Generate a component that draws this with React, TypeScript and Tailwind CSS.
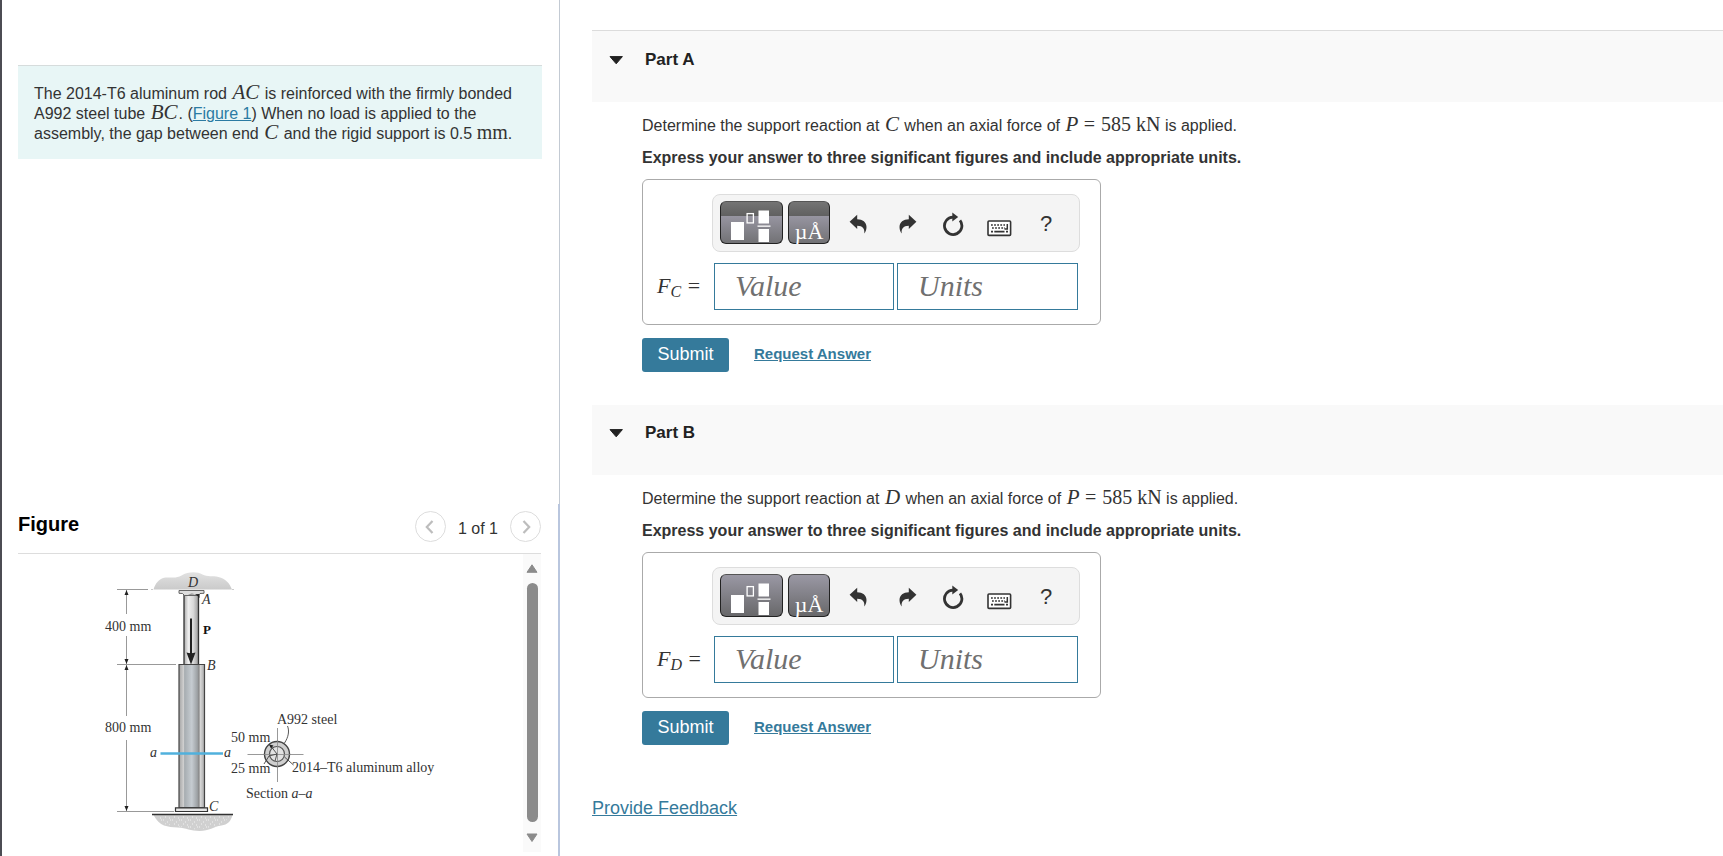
import type { ReactNode } from "react";

function MathVar({ children }: { children: ReactNode }) {
  return <i className="px-px font-['Liberation_Serif',serif] text-[21px] leading-[0]">{children}</i>;
}

function MathText({ children }: { children: ReactNode }) {
  return <span className="font-['Liberation_Serif',serif] text-[20px] leading-[0]">{children}</span>;
}

function TemplatesIcon() {
  return (
    <svg width="42" height="34" viewBox="1 0 42 34" aria-hidden="true">
      <rect x="1" y="13" width="13" height="18" fill="#fff" />
      <rect x="17.100" y="4.600" width="6.300" height="9.300" fill="none" stroke="#fff" strokeWidth="1.300" />
      <rect x="28.500" y="1.500" width="10.500" height="13" fill="#fff" />
      <rect x="27.500" y="16.500" width="13" height="1.300" fill="#fff" />
      <rect x="28.500" y="20" width="10.500" height="13" fill="#fff" />
    </svg>
  );
}

function UndoIcon() {
  return (
    <svg width="18" height="20" viewBox="0 0 18 20" aria-hidden="true">
      <path d="M.6 7.8 8.2.7v4.5c5.4 0 9.3 2.9 9.3 7.8 0 2.9-1 5-2.2 6.5.5-4.7-1.4-7.8-7.1-7.8v3.200z" fill="#333" />
    </svg>
  );
}

function RedoIcon() {
  return (
    <svg width="18" height="20" viewBox="0 0 18 20" aria-hidden="true">
      <path d="M17.4 7.8 9.8.7v4.5C4.4 5.2.5 8.1.5 13c0 2.9 1 5 2.2 6.5-.5-4.7 1.4-7.8 7.1-7.8v3.200z" fill="#333" />
    </svg>
  );
}

function ResetIcon() {
  return (
    <svg width="22" height="24" viewBox="0 0 22 24" aria-hidden="true">
      <path d="M18 8.400A8.700 8.700 0 1 1 11 5.100" fill="none" stroke="#333" strokeWidth="2.800" />
      <path d="M10.300.4 16.200 5l-5.900 4.600z" fill="#333" />
    </svg>
  );
}

function KeyboardIcon() {
  return (
    <svg width="25" height="17" viewBox="0 0 25 17" aria-hidden="true">
      <rect x="1" y="1" width="22.600" height="14.400" rx="1" fill="#fff" stroke="#333" strokeWidth="1.600" />
      <path d="M4 5h14M5 8h13" stroke="#333" strokeWidth="1.700" strokeDasharray="1.800 1.300" fill="none" />
      <path d="M20.300 4v5h-2.800" stroke="#333" strokeWidth="1.500" fill="none" />
      <path d="M4 11.600h2M7.300 11.600h10.200M19 11.600h2" stroke="#333" strokeWidth="1.700" fill="none" />
    </svg>
  );
}

type PartProps = {
  name: string;
  point: string;
  first?: boolean;
};

function Part({ name, point, first }: PartProps) {
  const paletteFill = first
    ? "bg-[linear-gradient(#747474_0,#606060_14px,#9795a1_14px,#727275_100%)]"
    : "bg-[linear-gradient(#9a98a4,#68686a)]";
  return (
    <section>
      <header className={first ? "border-t border-[#dcdcdc] bg-[#f9f9f9] pt-[17px] pb-[30px]" : "bg-[#f9f9f9] pt-4 pb-[30px]"}>
        <h2 className="text-[17px] leading-6 font-bold text-[#222]">
          <button type="button" className="flex items-center gap-[21px] pl-[17px]">
            <svg width="15" height="9" viewBox="0 0 15 9" aria-hidden="true">
              <path d="M1 .6h12.400L7.200 7.800z" fill="#222" stroke="#222" strokeLinejoin="round" />
            </svg>
            {name}
          </button>
        </h2>
      </header>
      <div className="pt-3 pl-[50px] text-base leading-6 text-[#333]">
        <p>
          Determine the support reaction at <MathVar>{point}</MathVar> when an axial force of <MathVar>P</MathVar>{" "}
          <MathText>
            <span className="pr-px">=</span> 585 kN
          </MathText>{" "}
          is applied.
        </p>
        <p className="mt-2 font-bold">Express your answer to three significant figures and include appropriate units.</p>
        <div className="mt-[9px] w-[459px] rounded-md border border-[#aaa] pt-[14px] pr-5 pb-[14px] pl-[14px]">
          <div className="ml-[55px] flex h-[58px] items-center rounded-lg border border-[#ddd] bg-[#f4f4f4] pt-[2px] pl-[7px]">
            <button type="button" aria-label="Templates" className={`mt-1 flex h-[43px] w-[63px] items-end justify-center self-start rounded-md border border-[#222] border-t-[#555] ${paletteFill}`}>
              <TemplatesIcon />
            </button>
            <button type="button" aria-label="Symbols" className={`mt-1 ml-[5px] flex h-[43px] w-[42px] items-end justify-center self-start rounded-md border border-[#222] border-t-[#555] font-['Liberation_Serif',serif] text-[22px] leading-[22px] text-white ${paletteFill}`}>
              µÅ
            </button>
            <button type="button" aria-label="Undo" className="ml-[19px]">
              <UndoIcon />
            </button>
            <button type="button" aria-label="Redo" className="ml-8">
              <RedoIcon />
            </button>
            <button type="button" aria-label="Reset" className="ml-[25px]">
              <ResetIcon />
            </button>
            <button type="button" aria-label="Keyboard shortcuts" className="mt-2 ml-[23px]">
              <KeyboardIcon />
            </button>
            <button type="button" aria-label="Help" className="ml-[28px] text-[22px] leading-6 text-[#333]">
              ?
            </button>
          </div>
          <div className="mt-[11px] flex items-center">
            <label htmlFor={`value-${point}`} className="w-[57px] font-['Liberation_Serif',serif] text-[22px] whitespace-nowrap">
              <i>F</i>
              <sub className="text-base italic">{point}</sub> <span className="pl-px">=</span>
            </label>
            <input
              id={`value-${point}`}
              placeholder="Value"
              className="h-[47px] w-[180px] border border-[#357a9b] bg-white pb-[2px] pl-5 font-['Liberation_Serif',serif] text-[30px] placeholder:text-[#707070] placeholder:italic"
            />
            <input
              aria-label="Units"
              placeholder="Units"
              className="ml-[3px] h-[47px] w-[181px] border border-[#357a9b] bg-white pb-[2px] pl-5 font-['Liberation_Serif',serif] text-[30px] placeholder:text-[#707070] placeholder:italic"
            />
          </div>
        </div>
        <div className="mt-[13px] flex items-center gap-[25px]">
          <button type="button" className="h-[34px] w-[87px] rounded-[3px] bg-[#357a9b] pb-[2px] text-lg leading-6 text-white">
            Submit
          </button>
          <a href="#answer" className="pb-[2px] text-[15px] font-bold text-[#357a9b] underline">
            Request Answer
          </a>
        </div>
      </div>
    </section>
  );
}

function RodFigure() {
  return (
    <svg width="504" height="298" viewBox="18 554 504 298" role="img" aria-label="Aluminum rod and steel tube assembly" className="font-['Liberation_Serif',serif]">
      <defs>
        <linearGradient id="rod">
          <stop offset="0" stopColor="#aaa" />
          <stop offset=".3" stopColor="#eee" />
          <stop offset=".65" stopColor="#d8d8d8" />
          <stop offset="1" stopColor="#999" />
        </linearGradient>
        <linearGradient id="tube">
          <stop offset="0" stopColor="#a3a3a3" />
          <stop offset=".18" stopColor="#cfcfcf" />
          <stop offset=".22" stopColor="#a7adb1" />
          <stop offset=".5" stopColor="#c6ccd1" />
          <stop offset=".72" stopColor="#9da1a4" />
          <stop offset=".78" stopColor="#888" />
          <stop offset=".84" stopColor="#d6d6d6" />
          <stop offset="1" stopColor="#a8a8a8" />
        </linearGradient>
        <linearGradient id="wall" x2="0" y2="1">
          <stop offset="0" stopColor="#e2e2e2" />
          <stop offset="1" stopColor="#cacaca" />
        </linearGradient>
        <pattern id="grain" width="9" height="7" patternUnits="userSpaceOnUse">
          <path d="M1 1h1M5 3h1M3 5h1M7 6h1M8 1h1" stroke="#f2f2f2" />
        </pattern>
      </defs>

      <path d="M153.500 589.500c2-6 5-11 12-12 7-.5 11 1 16-2 6-3.500 15-4.500 21-1 5 2.500 10 1 16 2.500 7 1.500 11 6 13.500 12.500z" fill="url(#wall)" />
      <path d="M153.500 815h79c-2 7-5 9.500-11 10.500-8 1-12 5.500-22 5.500-9 0-13-3-22-3.500-10-.5-18-1-24-12.500z" fill="#d0d0d0" />
      <path d="M157 816h73l-8 9-24 5-35-6z" fill="url(#grain)" />

      <g stroke="#999" strokeWidth="1">
        <path d="M117 589.500h31M151.500 589.500h1M232.500 589.500h1M117 664.500h59M117 811.500h57M126.500 590v24M126.500 636v80M126.500 740v71" />
        <path d="M247.500 754.500h56M277.500 728v54" />
      </g>
      <path d="M126.500 590l-2 5h4zM126.500 664l-2-5h4zM126.500 665l-2 5h4zM126.500 811l-2-5h4z" fill="#222" />

      <path d="M184 594h14.500v70.500H184z" fill="url(#rod)" />
      <path d="M184 594v70M198.500 594v70" stroke="#333" strokeWidth="1.300" />
      <path d="M179 590.500h25v2.800l-4 .2-2 2h-13.500l-2-2-3.500-.2z" fill="#ddd" stroke="#555" strokeWidth=".9" />
      <path d="M188 594.500q7-2.500 11.500 3.500v-4z" fill="#222" />
      <path d="M191 618.500v36" stroke="#222" strokeWidth="2" />
      <path d="M186.500 652.500q4.500 1.500 9 0l-4.500 12z" fill="#222" />
      <path d="M179 664.500h25.500v143H179z" fill="url(#tube)" stroke="#444" strokeWidth="1.200" />
      <path d="M175.500 807.800h32v3.700h-32z" fill="#e8e8e8" stroke="#333" strokeWidth="1.200" />
      <path d="M152 814.400h81" stroke="#333" strokeWidth="1.500" />
      <path d="M160.500 753.500H223" stroke="#50b1dd" strokeWidth="2.400" />

      <circle cx="277" cy="754" r="12.500" fill="#cfcfcf" stroke="#444" strokeWidth="1.400" />
      <circle cx="277" cy="754" r="7.500" fill="#e2e2e2" stroke="#555" strokeWidth="1.200" />
      <path d="M264 754.500h26M277.500 741v26" stroke="#888" strokeWidth=".8" />
      <path d="M270 745l7 9-2 7M277 754l-8 2-5 8M287.500 726c2 5 1 11-3 17M284.500 757l9 8" fill="none" stroke="#444" strokeWidth=".9" />
      <path d="M269 744.500l4.500 1-2.500 3z" fill="#222" />

      <g fill="#333" fontSize="14">
        <text x="105" y="631">400 mm</text>
        <text x="105" y="732">800 mm</text>
        <text x="231" y="742">50 mm</text>
        <text x="231" y="773">25 mm</text>
        <text x="277" y="724">A992 steel</text>
        <text x="292" y="772">2014–T6 aluminum alloy</text>
        <text x="246" y="798">Section <tspan fontStyle="italic">a–a</tspan></text>
      </g>
      <text x="203" y="634" fontSize="13" fontWeight="bold" fill="#111">P</text>
      <g fill="#333" fontSize="14" fontStyle="italic">
        <text x="188" y="587">D</text>
        <text x="202" y="604">A</text>
        <text x="207" y="670">B</text>
        <text x="209" y="811">C</text>
        <text x="150" y="757">a</text>
        <text x="224" y="757">a</text>
      </g>
    </svg>
  );
}

function Chevron({ d }: { d: string }) {
  return (
    <svg width="16" height="16" viewBox="0 0 16 16" aria-hidden="true">
      <path d={d} fill="none" stroke="#bdbdbd" strokeWidth="2.200" />
    </svg>
  );
}

export default function App() {
  return (
    <div className="flex min-h-screen bg-white font-['Liberation_Sans',Arial,sans-serif]">
      <aside className="flex w-[560px] shrink-0 flex-col border-l-2 border-[#4c4c53]">
        <div className="grow border-r border-[#c3cad3] pt-[65px] pr-[17px] pl-4">
          <p className="border-t border-[#d6dcdc] bg-[#e8f6f6] px-4 pt-[18px] pb-[15px] text-base leading-5 text-[#333]">
            The 2014-T6 aluminum rod <MathVar>AC</MathVar> is reinforced with the firmly bonded A992 steel tube{" "}
            <MathVar>BC</MathVar>. (
            <a href="#figure" className="text-[#2b7ba3] underline">
              Figure 1
            </a>
            ) When no load is applied to the assembly, the gap between end <MathVar>C</MathVar> and the rigid support is
            0.5 <MathText>mm</MathText>.
          </p>
        </div>
        <section id="figure" className="border-r-2 border-[#b9c6de] pt-[7px] pr-[17px] pb-1 pl-4">
          <div className="flex items-center justify-between border-b border-[#ddd] pb-[11px]">
            <h2 className="pb-[6px] text-xl leading-6 font-bold text-black">Figure</h2>
            <div className="flex items-center gap-3">
              <button type="button" aria-label="Previous figure" className="flex size-[31px] items-center justify-center rounded-full border border-[#ddd]">
                <Chevron d="M10.500 2 4.800 8l5.700 6" />
              </button>
              <span className="pt-[5px] text-base leading-6 text-[#333]">1 of 1</span>
              <button type="button" aria-label="Next figure" className="flex size-[31px] items-center justify-center rounded-full border border-[#ddd]">
                <Chevron d="M5.500 2l5.700 6-5.700 6" />
              </button>
            </div>
          </div>
          <div className="flex justify-between">
            <RodFigure />
            <div className="flex w-[18px] flex-col items-center gap-[10px] bg-[#fafafa] pt-[10px] pb-[9px]">
              <svg width="12" height="9" viewBox="0 0 12 9" aria-hidden="true">
                <path d="M6 .8 11 8.300H1z" fill="#8b8b8b" stroke="#8b8b8b" strokeLinejoin="round" />
              </svg>
              <div className="w-[11px] grow rounded-full bg-[#8b8b8b]" />
              <svg width="12" height="11" viewBox="0 0 12 11" aria-hidden="true">
                <path d="M6 9.500 11 2H1z" fill="#8b8b8b" stroke="#8b8b8b" strokeLinejoin="round" />
              </svg>
            </div>
          </div>
        </section>
      </aside>
      <main className="min-w-0 grow pt-[30px] pl-8">
        <div className="flex flex-col gap-[33px]">
          <Part name="Part A" point="C" first />
          <Part name="Part B" point="D" />
        </div>
        <a href="#feedback" className="mt-[51px] inline-block text-lg leading-6 text-[#357a9b] underline">
          Provide Feedback
        </a>
      </main>
    </div>
  );
}
